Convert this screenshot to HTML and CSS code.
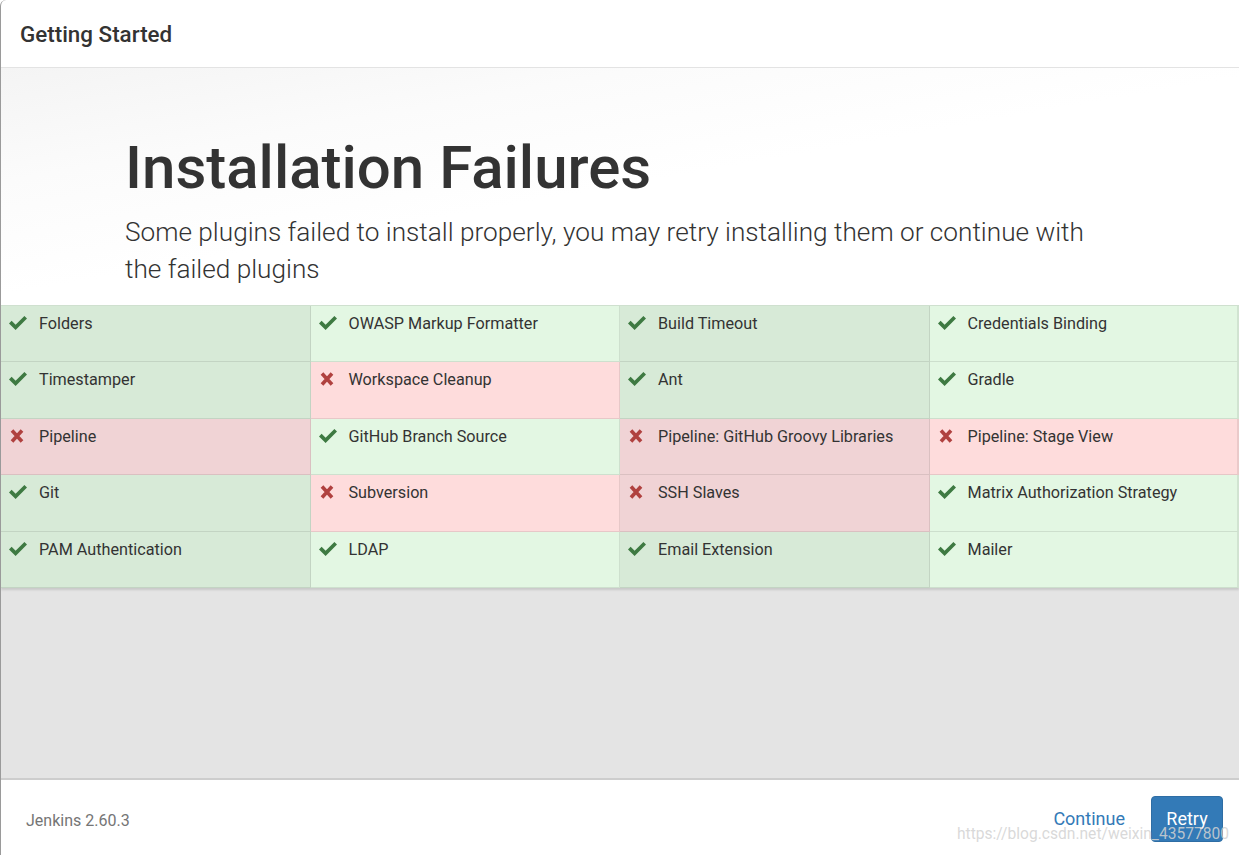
FILE: index.html
```html
<!DOCTYPE html>
<html lang="en">
<head>
    <meta charset="UTF-8">
    <title>Getting Started</title>
    <link rel="stylesheet" href="styles.css">
</head>
<body>
    <div class="wizard">
        <div class="wizard-header">Getting Started</div>

        <div class="hero">
            <h1>Installation Failures</h1>
            <p>Some plugins failed to install properly, you may retry installing them or continue with the failed plugins</p>
        </div>

        <div class="plugins">
            <div class="plugin ok"><svg class="icon" viewBox="0 0 18 14"><polygon points="0,7.4 2.6,4.8 6.6,8.8 15.4,0 18,2.6 6.6,14"/></svg>Folders</div>
            <div class="plugin ok"><svg class="icon" viewBox="0 0 18 14"><polygon points="0,7.4 2.6,4.8 6.6,8.8 15.4,0 18,2.6 6.6,14"/></svg>OWASP Markup Formatter</div>
            <div class="plugin ok"><svg class="icon" viewBox="0 0 18 14"><polygon points="0,7.4 2.6,4.8 6.6,8.8 15.4,0 18,2.6 6.6,14"/></svg>Build Timeout</div>
            <div class="plugin ok"><svg class="icon" viewBox="0 0 18 14"><polygon points="0,7.4 2.6,4.8 6.6,8.8 15.4,0 18,2.6 6.6,14"/></svg>Credentials Binding</div>

            <div class="plugin ok"><svg class="icon" viewBox="0 0 18 14"><polygon points="0,7.4 2.6,4.8 6.6,8.8 15.4,0 18,2.6 6.6,14"/></svg>Timestamper</div>
            <div class="plugin fail"><svg class="icon" viewBox="0 0 18 14"><path d="M3 1.5 L13 12.5 M13 1.5 L3 12.5"/></svg>Workspace Cleanup</div>
            <div class="plugin ok"><svg class="icon" viewBox="0 0 18 14"><polygon points="0,7.4 2.6,4.8 6.6,8.8 15.4,0 18,2.6 6.6,14"/></svg>Ant</div>
            <div class="plugin ok"><svg class="icon" viewBox="0 0 18 14"><polygon points="0,7.4 2.6,4.8 6.6,8.8 15.4,0 18,2.6 6.6,14"/></svg>Gradle</div>

            <div class="plugin fail"><svg class="icon" viewBox="0 0 18 14"><path d="M3 1.5 L13 12.5 M13 1.5 L3 12.5"/></svg>Pipeline</div>
            <div class="plugin ok"><svg class="icon" viewBox="0 0 18 14"><polygon points="0,7.4 2.6,4.8 6.6,8.8 15.4,0 18,2.6 6.6,14"/></svg>GitHub Branch Source</div>
            <div class="plugin fail"><svg class="icon" viewBox="0 0 18 14"><path d="M3 1.5 L13 12.5 M13 1.5 L3 12.5"/></svg>Pipeline: GitHub Groovy Libraries</div>
            <div class="plugin fail"><svg class="icon" viewBox="0 0 18 14"><path d="M3 1.5 L13 12.5 M13 1.5 L3 12.5"/></svg>Pipeline: Stage View</div>

            <div class="plugin ok"><svg class="icon" viewBox="0 0 18 14"><polygon points="0,7.4 2.6,4.8 6.6,8.8 15.4,0 18,2.6 6.6,14"/></svg>Git</div>
            <div class="plugin fail"><svg class="icon" viewBox="0 0 18 14"><path d="M3 1.5 L13 12.5 M13 1.5 L3 12.5"/></svg>Subversion</div>
            <div class="plugin fail"><svg class="icon" viewBox="0 0 18 14"><path d="M3 1.5 L13 12.5 M13 1.5 L3 12.5"/></svg>SSH Slaves</div>
            <div class="plugin ok"><svg class="icon" viewBox="0 0 18 14"><polygon points="0,7.4 2.6,4.8 6.6,8.8 15.4,0 18,2.6 6.6,14"/></svg>Matrix Authorization Strategy</div>

            <div class="plugin ok"><svg class="icon" viewBox="0 0 18 14"><polygon points="0,7.4 2.6,4.8 6.6,8.8 15.4,0 18,2.6 6.6,14"/></svg>PAM Authentication</div>
            <div class="plugin ok"><svg class="icon" viewBox="0 0 18 14"><polygon points="0,7.4 2.6,4.8 6.6,8.8 15.4,0 18,2.6 6.6,14"/></svg>LDAP</div>
            <div class="plugin ok"><svg class="icon" viewBox="0 0 18 14"><polygon points="0,7.4 2.6,4.8 6.6,8.8 15.4,0 18,2.6 6.6,14"/></svg>Email Extension</div>
            <div class="plugin ok"><svg class="icon" viewBox="0 0 18 14"><polygon points="0,7.4 2.6,4.8 6.6,8.8 15.4,0 18,2.6 6.6,14"/></svg>Mailer</div>
        </div>

        <div class="filler"></div>

        <div class="wizard-footer">
            <span class="version">Jenkins 2.60.3</span>
            <div class="actions">
                <a class="link" href="#">Continue</a>
                <button class="retry">Retry</button>
            </div>
            <span class="watermark">https://blog.csdn.net/weixin_43577800</span>
        </div>
    </div>
</body>
</html>
```

FILE: styles.css
```css
body {
    margin: 0;
    font-family: Roboto, "Liberation Sans", sans-serif;
    color: #333;
    background: #fff;
}

.wizard {
    height: 855px;
    display: flex;
    flex-direction: column;
    border-left: 1px solid #9a9a9a;
    border-top-left-radius: 6px;
    overflow: hidden;
    box-sizing: border-box;
}

.wizard-header {
    height: 67px;
    flex: none;
    display: flex;
    align-items: center;
    padding-left: 19px;
    font-size: 22.4px;
    font-weight: 500;
    border-bottom: 1px solid #e3e3e3;
}

.hero {
    flex: none;
    height: 237px;
    box-sizing: border-box;
    padding: 64px 150px 0 124px;
    background: linear-gradient(170deg, #f4f4f4 0%, #fbfbfb 25%, #fff 50%);
}

.hero h1 {
    margin: 0;
    font-size: 60px;
    font-weight: 500;
    line-height: 72px;
    color: #333;
}

.hero p {
    margin: 10px 0 0;
    font-size: 26.2px;
    font-weight: 300;
    line-height: 37px;
    color: #333;
}

.plugins {
    flex: none;
    display: grid;
    grid-template-columns: repeat(4, 1fr);
    grid-auto-rows: 56.4px;
    border-top: 1px solid #cfe0cf;
    box-shadow: 0 2px 2px rgba(0, 0, 0, 0.12);
    position: relative;
}

.plugin {
    display: flex;
    align-items: flex-start;
    padding: 8px 10px 0 8px;
    font-size: 16.2px;
    line-height: 19px;
    border-right: 1px solid rgba(0, 0, 0, 0.09);
    border-bottom: 1px solid rgba(0, 0, 0, 0.09);
    box-sizing: border-box;
}

.plugin:nth-child(4n) {
    border-right: 2px solid rgba(0, 0, 0, 0.08);
}

.plugin .icon {
    width: 18px;
    height: 14px;
    flex: none;
    margin: 2px 12px 0 0;
}

.ok {
    background: #e3f7e3;
}

.ok:nth-child(odd) {
    background: #d7ead7;
}

.ok .icon polygon {
    fill: #3e7a42;
}

.fail {
    background: #fedcdc;
}

.fail:nth-child(odd) {
    background: #f0d3d5;
}

.fail .icon path {
    stroke: #b0413f;
    stroke-width: 3.6;
    fill: none;
}

.filler {
    flex: 1;
    background: #e4e4e4;
    border-bottom: 2px solid #cdcdcd;
}

.wizard-footer {
    flex: none;
    height: 75px;
    display: flex;
    align-items: center;
    justify-content: space-between;
    padding: 0 16px 0 25px;
    position: relative;
}

.version {
    font-size: 16px;
    color: #757575;
    margin-top: 6px;
}

.actions {
    display: flex;
    align-items: center;
    gap: 26px;
    margin-top: 2px;
}

.link {
    color: #337ab7;
    font-size: 18px;
    text-decoration: none;
}

.retry {
    width: 72px;
    height: 46px;
    background: #337ab7;
    border: 1px solid #2e6da4;
    border-radius: 4px;
    color: #fff;
    font-family: Roboto, "Liberation Sans", sans-serif;
    font-size: 18px;
    padding: 0;
}

.watermark {
    position: absolute;
    right: 10px;
    top: 45px;
    font-size: 15.6px;
    color: rgba(210, 210, 210, 0.85);
    font-family: Roboto, "Liberation Sans", sans-serif;
}
```
